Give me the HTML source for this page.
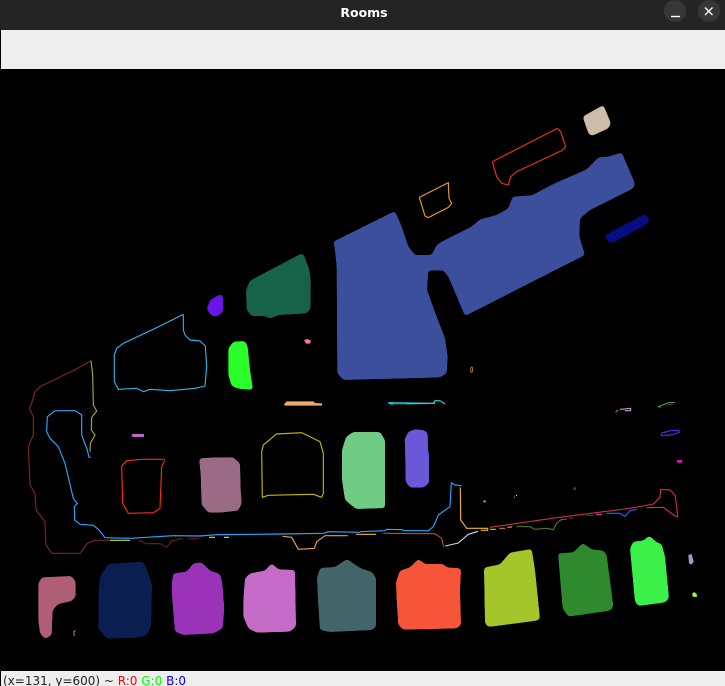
<!DOCTYPE html>
<html><head><meta charset="utf-8"><style>
html,body{margin:0;padding:0;background:#000}
#w{position:relative;width:725px;height:686px;overflow:hidden;background:#000;font-family:"DejaVu Sans","Liberation Sans",sans-serif}
#t{position:absolute;left:0;top:0;width:725px;height:30px;background:#242424}
#tt{position:absolute;left:0;width:725px;top:4px;text-align:center;padding-left:3px;box-sizing:border-box;color:#fff;font:bold 12.5px/17px "DejaVu Sans",sans-serif}
.b{position:absolute;top:0;width:22px;height:22px;border-radius:50%;background:#373737}
#bar{position:absolute;left:1px;top:30px;width:724px;height:39px;background:#eee}
#st{position:absolute;left:1px;top:671px;width:724px;height:15px;background:#eee;overflow:hidden;font-size:12px;line-height:20px;white-space:nowrap;color:#222;padding-left:2px}
svg{position:absolute;left:0;top:0}
polyline{fill:none;stroke-width:3.4;stroke-linejoin:round}
polygon{stroke-width:0}
.s{filter:url(#r)}
.a{filter:url(#r1)}
</style></head><body><div id="w">
<div id="t"><div id="tt">Rooms</div>
<div class="b" style="left:664px"></div><div class="b" style="left:698px"></div>
<svg width="725" height="30"><path d="M671 16.5h9" stroke="#fff" stroke-width="1.4"/><path d="M705 7.5l7.5 7.5M712.500 7.500l-7.500 7.500" stroke="#fff" stroke-width="1.3"/></svg></div>
<div id="bar"></div>
<svg width="725" height="686" style="top:0">
<defs>
<filter id="r" x="-15%" y="-15%" width="130%" height="130%" color-interpolation-filters="sRGB"><feGaussianBlur stdDeviation="5"/><feComponentTransfer><feFuncA type="linear" slope="12" intercept="-5.5"/></feComponentTransfer></filter>
<filter id="r1" x="-15%" y="-15%" width="130%" height="130%" color-interpolation-filters="sRGB"><feGaussianBlur stdDeviation="1.7"/><feComponentTransfer><feFuncA type="linear" slope="12" intercept="-5.5"/></feComponentTransfer></filter>
</defs>
<g transform="translate(320 90) scale(.33333)">
<polygon class="s" fill="#3b4f9c" points="40,455 225,363 245,410 265,470 285,495 335,495 350,465 365,455 455,410 480,388 530,375 565,355 578,320 635,316 700,282 800,238 835,202 865,200 905,187 945,280 940,295 810,360 780,385 778,440 795,495 435,678 385,560 370,541 325,541 321,600 350,680 375,745 383,800 380,850 360,862 250,865 70,870 52,850 50,530 45,480"/>
<polygon class="s" fill="#070d80" points="855,435 975,372 988,385 985,400 880,458 865,458"/>
<polygon class="s" fill="#cdbcaa" points="788,80 850,45 873,100 865,115 815,138 805,130"/>
<polyline stroke="#f03018" points="517,215 712,115 722,125 737,170 725,182 590,245 572,260 565,285 545,280 530,260 517,215"/>
<polyline stroke="#e8a020" points="298,322 385,278 387,325 395,340 385,352 325,383 315,378 298,322"/>
<ellipse cx="455" cy="839" rx="3" ry="8" fill="none" stroke="#b06a30" stroke-width="3"/>
</g>
<g transform="translate(100 240) scale(.33333)">
<polygon class="s" fill="#17634a" points="438,150 450,122 605,40 612,45 628,90 632,115 632,205 620,220 535,225 510,236 495,228 455,228 440,210"/>
<polygon class="s" fill="#6a14e8" points="320,208 330,180 362,162 369,170 369,215 355,228 335,228"/>
<polygon class="s" fill="#2bff2a" points="385,325 400,305 435,303 443,320 450,390 459,450 415,446 395,438 385,405"/>
<polygon fill="#ff70b0" points="612,300 622,297 633,302 630,311 618,311"/>
<polygon fill="#eeaa66" points="553,492 560,484 640,484 645,489 666,490 666,497 553,497"/>
<polyline stroke="#2fb5e8" points="250,223 170,263 70,310 50,325 43,345 43,425 55,448 110,445 130,455 150,448 210,452 285,445 315,438 320,380 316,318 300,303 270,300 255,285 250,270 250,223"/>
</g>
<g transform="translate(0 340) scale(.33333)">
<polyline stroke="#7a2a1a" points="273,62 220,92 120,140 105,155 95,190 88,205 100,230 100,285 85,320 90,435 105,460 108,510 135,545 138,615 155,640 240,640 262,610 285,601 328,601"/>
<polyline stroke="#a8a832" points="273,62 278,105 280,195 290,213 275,232 274,270 285,285 271,310 270,335"/>
<polyline stroke="#2aa6ff" points="272,352 267,352 262,330 245,285 245,225 225,212 165,212 142,230 140,275 150,295 175,320 195,370 220,475 232,490 223,500 224,540 240,553 280,556 297,570 315,593 393,595 470,590 520,587 600,588 650,584 850,582 970,580 985,575 1080,577"/>
<polyline stroke="#ff2a10" points="494,358 425,358 380,362 365,378 368,490 385,520 460,518 480,505 485,380 494,362"/>
<polygon class="s" fill="#9b6b85" points="597,355 645,352 700,352 720,370 722,450 725,490 715,512 660,518 625,518 605,495 602,400"/>
<polyline stroke="#c8b400" points="785,335 790,315 830,282 905,278 960,305 970,340 970,460 965,472 940,463 885,464 805,466 787,472 785,335"/>
<polygon fill="#c862c8" points="394,285 398,282 432,282 432,291 398,291"/>
<polyline stroke="#e8a040" points="848,589 875,592 895,628 943,625 950,605 975,587 1043,587"/>
<polyline stroke="#e8a040" points="1068,583 1080,583"/>
<polyline stroke="#d0d830" points="330,601 390,601"/>
<polyline stroke="#5a2a18" points="417,601 440,611 480,611 500,622 515,603 548,595"/>
<polyline stroke="#800040" points="565,595 597,595"/>
<polyline stroke="#b0e0a0" points="627,592 645,592"/>
<polyline stroke="#e0d080" points="672,592 687,592"/>
</g>
<polygon class="a" fill="#70cc85" points="342,450 346,437 353,432 380,432 385,440 385,508 356,509 345,500 342,480"/>
<g transform="translate(360 380) scale(.33333)">
<polyline stroke="#20d8e8" points="85,68 220,70 225,62 240,62 255,72"/>
<polyline stroke="#20d8e8" points="85,68 92,72 225,70"/>
<polyline stroke="#1a3020" points="100,73 140,73"/>
<polyline stroke="#c06020" points="767,97 770,92 776,92"/>
<polyline stroke="#c898d0" points="780,88 795,87 812,85 812,92 795,92"/>
<polyline stroke="#3a9a50" points="902,82 895,80 925,68 945,67"/>
<polyline stroke="#8a1a40" points="920,76 940,72"/>
<polyline stroke="#5a28f0" points="904,160 930,152 957,151 957,158 930,165 904,167 904,160"/>
<rect x="951" y="240" width="15" height="8" fill="#ff00d8"/>
<polygon class="s" fill="#6a58d8" points="133,180 145,155 165,148 190,150 203,158 204,215 207,220 207,310 190,323 150,323 137,305 135,190"/>
<polyline stroke="#2aa6ff" points="0,455 75,452 80,448 128,449 130,452 205,452 220,440 235,405 270,380 274,308 285,315 305,317"/>
<polyline stroke="#f0b820" points="301,322 302,420 320,445 383,445 383,451 362,451"/>
<polyline stroke="#f0b820" points="0,463 48,463"/>
<polyline stroke="#b05a20" points="70,460 225,461 245,475 251,500"/>
<polyline stroke="#d0d8f8" points="256,498 295,489 325,463 354,454"/>
<polyline stroke="#c83048" points="390,442 590,413 810,385 880,372 900,352 902,328 930,330 945,345 950,380 953,410 945,408 910,382 860,383"/>
<polyline stroke="#90d050" points="390,448 408,448"/>
<polyline stroke="#d08030" points="418,445 435,445"/>
<polyline stroke="#a0a080" points="442,442 456,441"/>
<polyline stroke="#4a7a20" points="470,439 510,440 525,448 560,445 580,449 590,430 605,418 620,418"/>
<polyline stroke="#503040" points="627,415 640,414"/>
<polyline stroke="#2a5a20" points="680,406 700,406"/>
<polyline stroke="#d040c0" points="708,403 726,403"/>
<polyline stroke="#1a70e8" points="740,400 780,400 795,409 810,392 830,388"/>
<rect x="640" y="322" width="8" height="8" fill="#3a4a10"/>
<rect x="468" y="345" width="3" height="3" fill="#eee"/>
<rect x="462" y="350" width="3" height="3" fill="#9cf"/>
<polyline stroke="#70c070" points="377,362 371,364 377,367"/>
</g>
<g transform="translate(0 540) scale(.33333)">
<polygon class="s" fill="#b05e76" points="115,130 125,112 215,108 227,125 227,170 215,183 175,192 158,210 155,285 135,297 120,280 115,240"/>
<polygon class="s" fill="#0a1f50" points="295,160 300,110 325,72 430,65 445,100 456,135 453,260 440,285 415,293 320,296 295,265"/>
<polygon class="s" fill="#9b33b8" points="515,130 520,100 560,95 580,70 605,67 630,92 660,102 667,130 673,205 668,265 640,280 550,285 525,275 517,180"/>
<polygon class="s" fill="#c46cc8" points="730,180 735,115 750,100 795,92 815,70 835,88 885,90 888,260 870,275 770,278 745,265 730,230"/>
<polyline stroke="#e040b0" points="227,272 221,275 223,288"/>
</g>
<polygon class="a" fill="#42656a" points="317,578 320,568 335,567 347,559 360,568 372,572 376,578 376,627 372,630 330,632 320,630 318,600"/>
<g transform="translate(360 520) scale(.33333)">
<polygon class="s" fill="#f7553a" points="108,185 120,152 150,142 175,117 195,132 250,132 260,142 303,145 300,215 303,315 290,325 130,329 115,315 110,240"/>
<polygon class="s" fill="#a4c62a" points="372,143 420,133 450,98 515,87 525,150 540,297 530,302 385,321 375,310"/>
<polygon class="s" fill="#2f8a2e" points="594,100 640,97 668,69 695,88 730,92 740,105 760,260 750,272 625,290 608,265"/>
<polygon class="s" fill="#3cf04a" points="810,85 820,65 850,62 868,47 890,67 905,72 915,110 927,235 915,247 835,258 825,245"/>
<polygon fill="#a898c0" points="985,105 995,102 1001,125 995,134 987,130"/>
<polygon fill="#90ff50" points="997,220 1003,216 1011,224 1010,231 998,230"/>
</g>
</svg>
<div id="st">(x=131, y=600) ~ <span style="color:#f00">R:0</span> <span style="color:#0f0">G:0</span> <span style="color:#00f">B:0</span></div>
</div></body></html>
